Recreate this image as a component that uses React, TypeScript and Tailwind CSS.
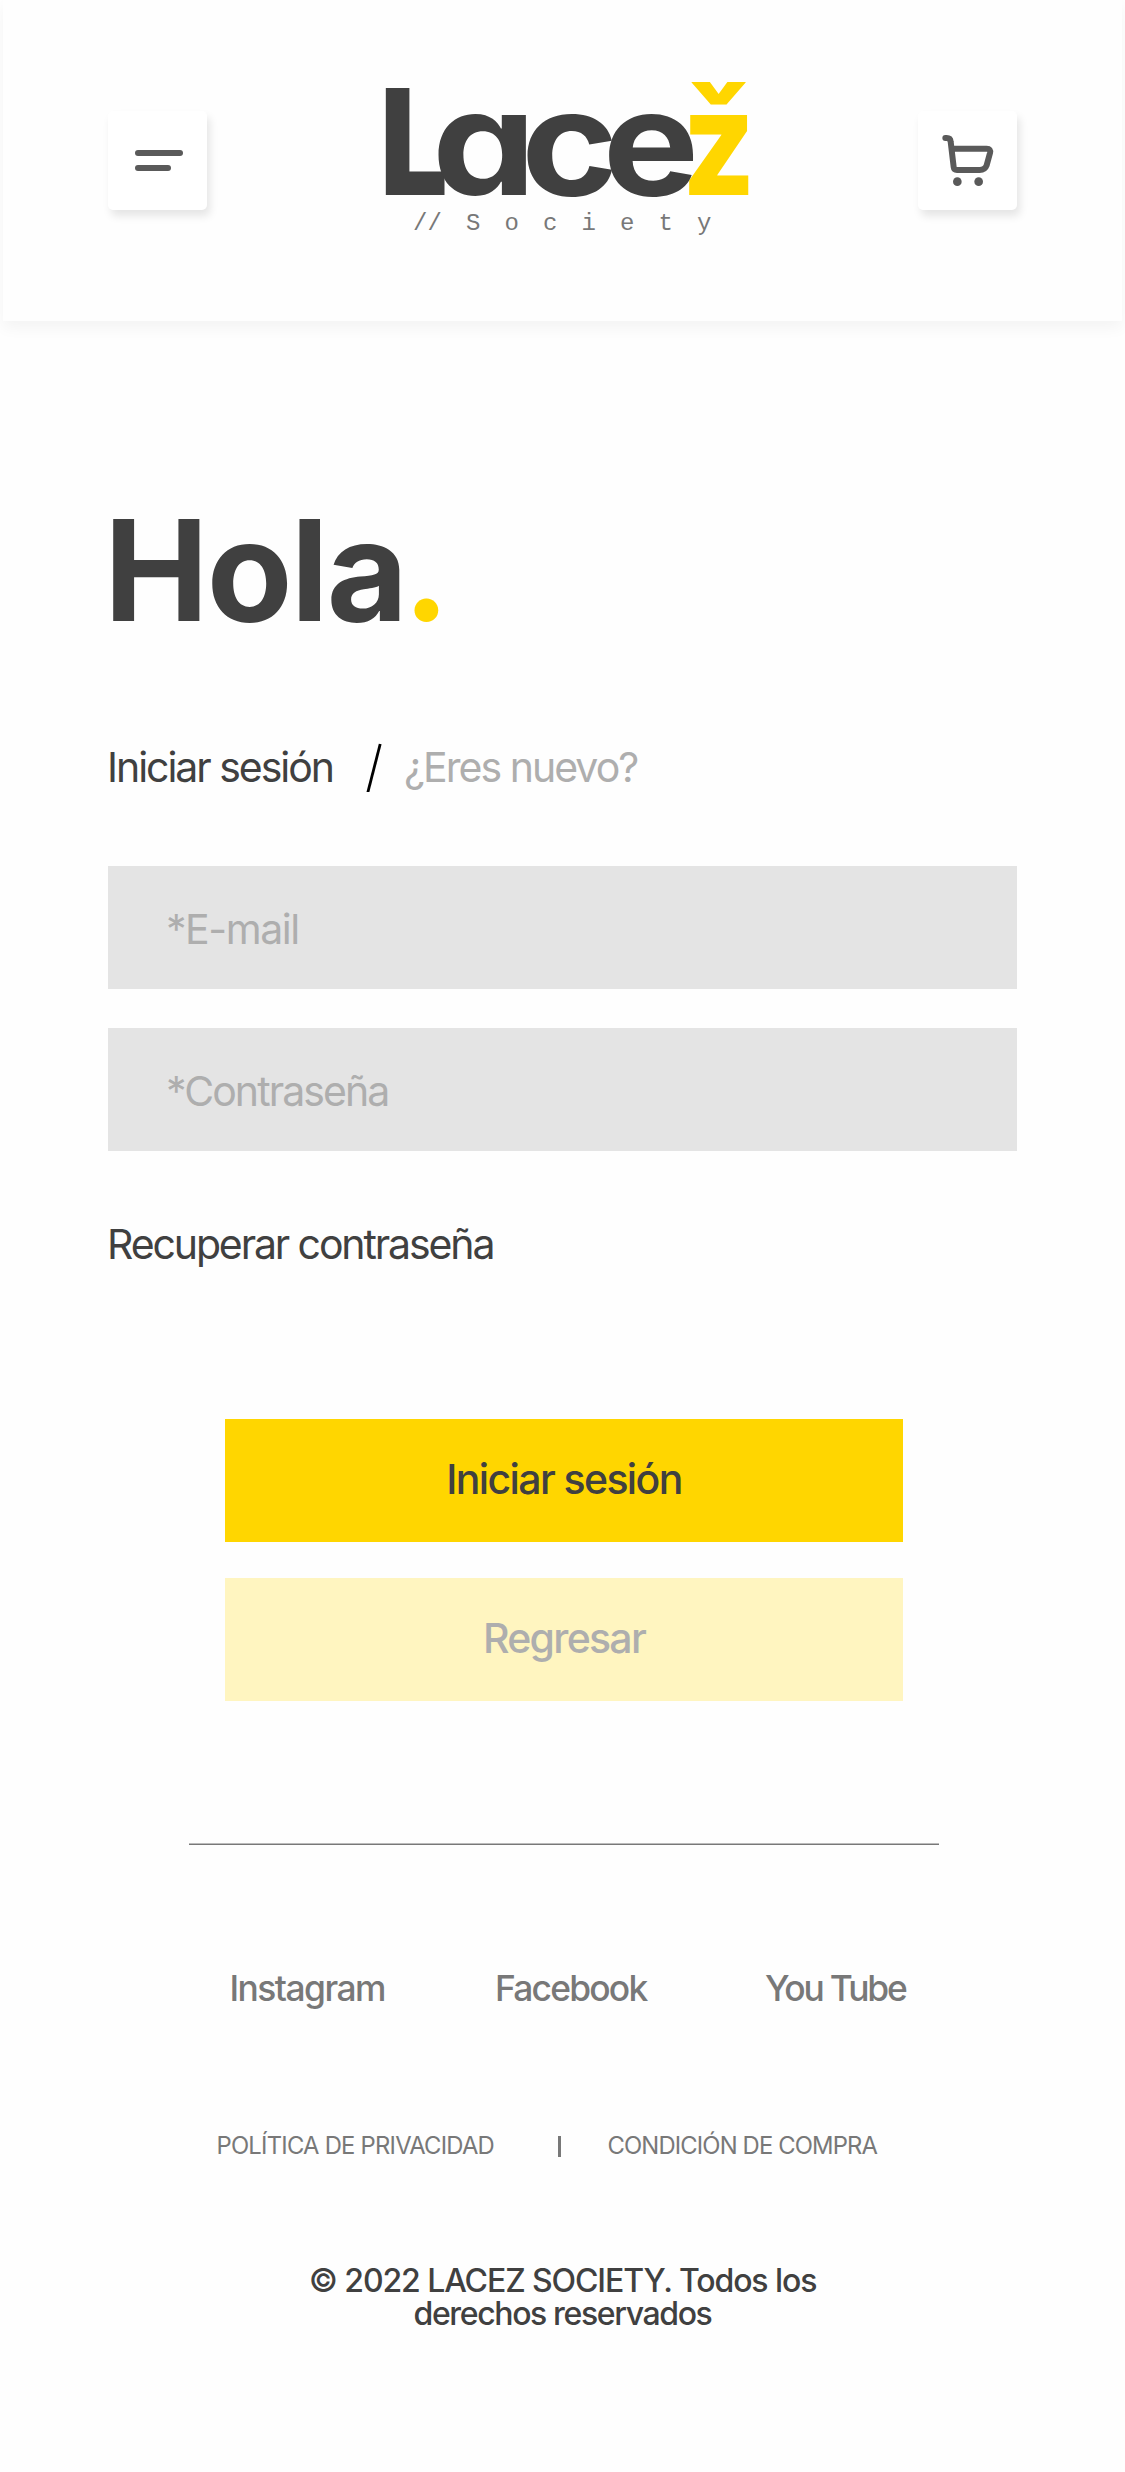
import React from "react";

function Logo() {
  return (
    <svg viewBox="370 60 400 140" className="block h-[140px] w-[400px] overflow-visible" fontFamily="Inter" fontWeight={700} fontSize={147} style={{ fontFeatureSettings: '"cv11"' }}>
      <text transform="translate(682 195) scale(.86 1)" fontWeight={800} fill="#ffd600">ž</text>
      <g fill="#404040">
        <text transform="translate(380.3 195) scale(.812 1)" fontWeight={900}>L</text>
        <text transform="translate(432 195) scale(1.125 1)">a</text>
        <text transform="translate(521.1 195) scale(1.125 1)">c</text>
        <text transform="translate(602.7 195) scale(1.1 1)">e</text>
      </g>
    </svg>
  );
}

function CartIcon() {
  return (
    <svg viewBox="53 63 297 297" className="block size-[99px]" fill="none" stroke="#5a5a5a" strokeWidth="18" strokeLinecap="round" strokeLinejoin="round">
      <path d="M135 144H139Q150 144 151 155L160 231Q161 240 170 240H238Q254 240 259 226L269 189Q272 176 259 176H158" />
      <circle cx="171" cy="275" r="13" fill="#5a5a5a" stroke="none" />
      <circle cx="235" cy="275" r="13" fill="#5a5a5a" stroke="none" />
    </svg>
  );
}

const tile = "size-[99px] rounded-[5px] bg-white shadow-[3px_6px_9px_rgba(0,0,0,0.1)]";

export default function App() {
  return (
    <div className="h-[2472px] w-[1125px] overflow-hidden bg-[#fefefe] font-['Inter',sans-serif] text-[#404040]">
      <header className="mx-[3px] flex h-[321px] items-start justify-between bg-[#fefefe] px-[105px] shadow-[0_7px_14px_rgba(0,0,0,0.045)]">
        <button aria-label="Menú" className={tile + " mt-[111px] flex flex-col gap-[9px] pt-[39px] pl-[27px]"}>
          <span className="h-[6px] w-12 rounded-full bg-[#5a5a5a]" />
          <span className="h-[6px] w-9 rounded-full bg-[#5a5a5a]" />
        </button>
        <div className="mt-[60px] ml-[15px] w-[400px]">
          <Logo />
          <p className="mt-[9px] ml-[43px] font-['Liberation_Mono',monospace] text-[24px] leading-[30px] whitespace-nowrap text-[#787878] [word-spacing:9.7px]">// S o c i e t y</p>
        </div>
        <button aria-label="Carrito" className={tile + " mt-[111px]"}>
          <CartIcon />
        </button>
      </header>

      <main className="px-[108px]">
        <h1 className="mt-[179px] -ml-[4px] text-[140px] leading-[140px] font-bold tracking-[-1.9px]">
          Hola<span className="ml-[-3px] text-[#ffd600]">.</span>
        </h1>
        <nav className="mt-[102px] flex h-[50px] items-center text-[41px] leading-[50px] whitespace-nowrap">
          <a className="-ml-[1px] w-[259px] tracking-[-2.04px]">Iniciar sesión</a>
          <svg viewBox="0 0 16 50" className="h-[50px] w-4 shrink-0" stroke="#000" strokeWidth="2.8">
            <path d="M1.8 50.5L14.2 2" />
          </svg>
          <a className="ml-[22px] tracking-[-1.96px] text-[#aeaeae]">¿Eres nuevo?</a>
        </nav>
        <form className="mt-[74px] flex flex-col gap-[39px] text-[41px] text-[#aeaeae]">
          <div className="flex h-[123px] items-center bg-[#e4e4e4] pt-[5px] pl-[58px] tracking-[-1.43px]">*E-mail</div>
          <div className="flex h-[123px] items-center bg-[#e4e4e4] pt-[5px] pl-[58px] tracking-[-1.92px]">*Contraseña</div>
        </form>
        <a className="mt-[68px] -ml-[1px] block text-[41px] leading-[50px] tracking-[-2.12px]">Recuperar contraseña</a>
        <div className="mt-[150px] ml-[117px] flex w-[678px] flex-col gap-[36px] text-[41px] font-medium">
          <button className="h-[123px] bg-[#ffd600] pb-[1px] tracking-[-1.62px]">Iniciar sesión</button>
          <button className="h-[123px] bg-[#fff5c0] pb-[1px] tracking-[-1.72px] text-[#aeaeae]">Regresar</button>
        </div>
      </main>

      <footer className="mt-[142px]">
        <div className="ml-[189px] h-[2px] w-[750px] border-b border-[#787878] bg-[#bbbbbb]" />
        <div className="mt-[124px] flex h-10 pl-[229.5px] text-[35.4px] leading-10 font-medium whitespace-nowrap text-[#787878]">
          <a className="w-[265.5px] tracking-[-1.55px]">Instagram</a>
          <a className="w-[270px] tracking-[-1.8px]">Facebook</a>
          <a className="tracking-[-2.2px]">You Tube</a>
        </div>
        <div className="mt-[122px] flex h-[30px] items-center pl-[216.5px] text-[23.8px] leading-[30px] whitespace-nowrap text-[#787878]">
          <a className="w-[341.5px] tracking-[-0.76px]">POLÍTICA DE PRIVACIDAD</a>
          <span className="h-[21px] w-[3px] bg-[#787878]" />
          <a className="ml-[46.5px] tracking-[-0.86px]">CONDICIÓN DE COMPRA</a>
        </div>
        <p className="mt-[103px] text-center text-[32px] leading-[33px] font-medium">
          <span className="tracking-[-1.1px]">© 2022 LACEZ SOCIETY. Todos los</span>
          <br />
          <span className="tracking-[-1.38px]">derechos reservados</span>
        </p>
      </footer>
    </div>
  );
}
